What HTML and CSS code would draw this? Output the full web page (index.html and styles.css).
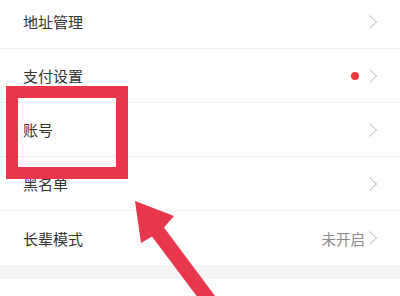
FILE: index.html
```html
<!DOCTYPE html>
<html>
  <head>
    <meta charset="UTF-8">
    <title>设置</title>
    <link rel="stylesheet" href="styles.css">
  </head>
  <body>
    <div class="page">
      <ul class="menu">
        <li class="item">
          <span class="label">地址管理</span>
          <span class="right"><span class="chevron"></span></span>
        </li>
        <li class="item">
          <span class="label">支付设置</span>
          <span class="right"><span class="dot"></span><span class="chevron"></span></span>
        </li>
        <li class="item">
          <span class="label">账号</span>
          <span class="right"><span class="chevron"></span></span>
        </li>
        <li class="item">
          <span class="label">黑名单</span>
          <span class="right"><span class="chevron"></span></span>
        </li>
        <li class="item">
          <span class="label">长辈模式</span>
          <span class="right"><span class="value">未开启</span><span class="chevron"></span></span>
        </li>
      </ul>
      <div class="gap"></div>
      <div class="next"></div>

      <svg class="marks" width="400" height="296" viewBox="0 0 400 296">
        <rect x="12" y="92" width="110" height="81" fill="none" stroke="#e8374b" stroke-width="12"/>
        <polygon fill="#e8374b" points="135,201 174,216 164,227.5 218,300 199.6,300 152,236.5 141,243"/>
      </svg>
    </div>
  </body>
</html>
```

FILE: styles.css
```css
body {
  margin: 0;
  font-family: "Noto Sans CJK SC", "Noto Sans", sans-serif;
  background-color: #fff;
}

.page {
  position: relative;
  width: 400px;
  height: 296px;
  overflow: hidden;
}

.menu {
  list-style: none;
  margin: -5px 0 0 0;
  padding: 0;
}

.item {
  display: flex;
  align-items: center;
  justify-content: space-between;
  height: 53px;
  padding: 0 22px 0 23px;
  border-bottom: 1px solid #f0f0f0;
}

.item:last-child {
  border-bottom: none;
  height: 54px;
}

.label {
  font-size: 15px;
  color: #333;
}

.right {
  display: flex;
  align-items: center;
}

.dot {
  width: 8px;
  height: 8px;
  border-radius: 50%;
  background-color: #ee3b3d;
  margin-right: 6px;
}

.value {
  font-size: 14.5px;
  color: #8a8a8a;
}

.chevron {
  width: 10px;
  height: 10px;
  box-sizing: border-box;
  border-top: 1.5px solid #c9c9c9;
  border-right: 1.5px solid #c9c9c9;
  transform: rotate(45deg);
  margin-right: 3px;
}

.gap {
  height: 14px;
  background-color: #f5f5f8;
}

.next {
  height: 20px;
  background-color: #fff;
}

.marks {
  position: absolute;
  left: 0;
  top: 0;
  pointer-events: none;
}
```
